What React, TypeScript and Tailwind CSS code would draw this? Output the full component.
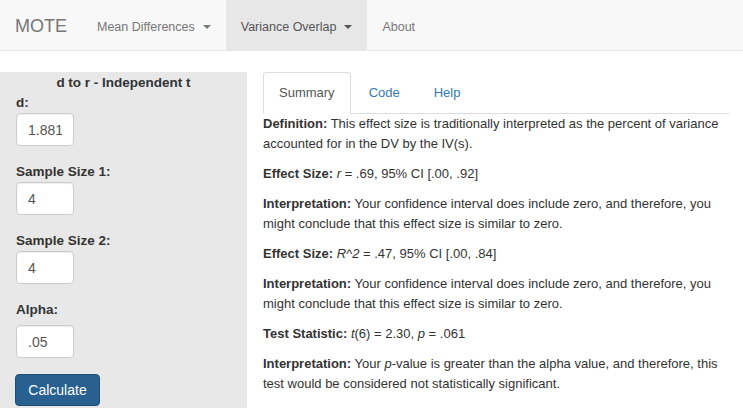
import React from "react";

function Caret() {
  return (
    <span className="inline-block w-0 h-0 ml-[8px] border-t-[4px] border-t-current border-x-[4px] border-x-transparent align-middle" />
  );
}

export default function App() {
  const labelCls = "block font-bold leading-[20px] text-[13.5px]";
  const inputCls =
    "block w-[58px] h-[33px] border border-[#ccc] rounded-[4px] bg-white px-[11px] text-[14px] text-[#555] leading-[20px] shadow-[inset_0_1px_1px_rgba(0,0,0,0.075)]";
  const navItem = "px-[15px] h-[50px] pt-[3px] text-[12.5px] flex items-center";
  return (
    <div
      className="w-[743px] h-[408px] overflow-hidden bg-white text-[13px] leading-[20px] text-[#333]"
      style={{ fontFamily: '"Liberation Sans", Arial, sans-serif' }}
    >
      <nav className="h-[51px] bg-[#f8f8f8] border-b border-[#e7e7e7] flex">
        <div className="px-[15px] text-[18px] h-[50px] pt-[2px] flex items-center text-[#777]">MOTE</div>
        <div className="flex">
          <div className={navItem + " text-[#777]"}>
            Mean Differences
            <Caret />
          </div>
          <div className={navItem + " text-[#555] bg-[#e7e7e7]"}>
            Variance Overlap
            <Caret />
          </div>
          <div className={navItem + " text-[#777]"}>About</div>
        </div>
      </nav>
      <div className="flex mt-[21px]">
        <aside className="w-[247px] h-[340px] bg-[#e8e8e8] pl-[16px] pr-[16px] pt-[1px] shrink-0">
          <div className="font-bold text-center leading-[20px] text-[13.5px] -ml-[16px] -mr-[16px]">
            d to r - Independent t
          </div>
          <label className={labelCls}>d:</label>
          <input className={inputCls} defaultValue="1.881" readOnly />
          <label className={labelCls + " mt-[16px]"}>Sample Size 1:</label>
          <input className={inputCls} defaultValue="4" readOnly />
          <label className={labelCls + " mt-[16px]"}>Sample Size 2:</label>
          <input className={inputCls} defaultValue="4" readOnly />
          <label className={labelCls + " mt-[16px] mb-[5px]"}>Alpha:</label>
          <input className={inputCls} defaultValue=".05" readOnly />
          <button className="mt-[16px] -ml-px w-[85px] h-[32px] rounded-[4px] bg-[#286090] border border-[#204d74] text-white text-[14px] leading-[20px]">
            Calculate
          </button>
        </aside>
        <main className="flex-1 pl-[16px] pr-[14px]">
          <div className="flex border-b border-[#ddd] h-[42px]">
            <div className="px-[15px] py-[10px] leading-[20px] border border-[#ddd] border-b-white bg-white rounded-t-[4px] text-[#555] mr-[2px] h-[42px]">
              Summary
            </div>
            <div className="px-[15px] py-[10px] leading-[20px] border border-transparent text-[#337ab7] mr-[2px]">
              Code
            </div>
            <div className="px-[15px] py-[10px] leading-[20px] border border-transparent text-[#337ab7]">
              Help
            </div>
          </div>
          <div>
            <p className="mb-[10px]">
              <b>Definition:</b> This effect size is traditionally interpreted as the percent of variance accounted for in the DV by the IV(s).
            </p>
            <p className="mb-[10px]">
              <b>Effect Size:</b> <i>r</i> = .69, 95% CI [.00, .92]
            </p>
            <p className="mb-[10px]">
              <b>Interpretation:</b> Your confidence interval does include zero, and therefore, you might conclude that this effect size is similar to zero.
            </p>
            <p className="mb-[10px]">
              <b>Effect Size:</b> <i>R^2</i> = .47, 95% CI [.00, .84]
            </p>
            <p className="mb-[10px]">
              <b>Interpretation:</b> Your confidence interval does include zero, and therefore, you might conclude that this effect size is similar to zero.
            </p>
            <p className="mb-[10px]">
              <b>Test Statistic:</b> <i>t</i>(6) = 2.30, <i>p</i> = .061
            </p>
            <p className="mb-[10px]">
              <b>Interpretation:</b> Your <i>p</i>-value is greater than the alpha value, and therefore, this test would be considered not statistically significant.
            </p>
          </div>
        </main>
      </div>
    </div>
  );
}
